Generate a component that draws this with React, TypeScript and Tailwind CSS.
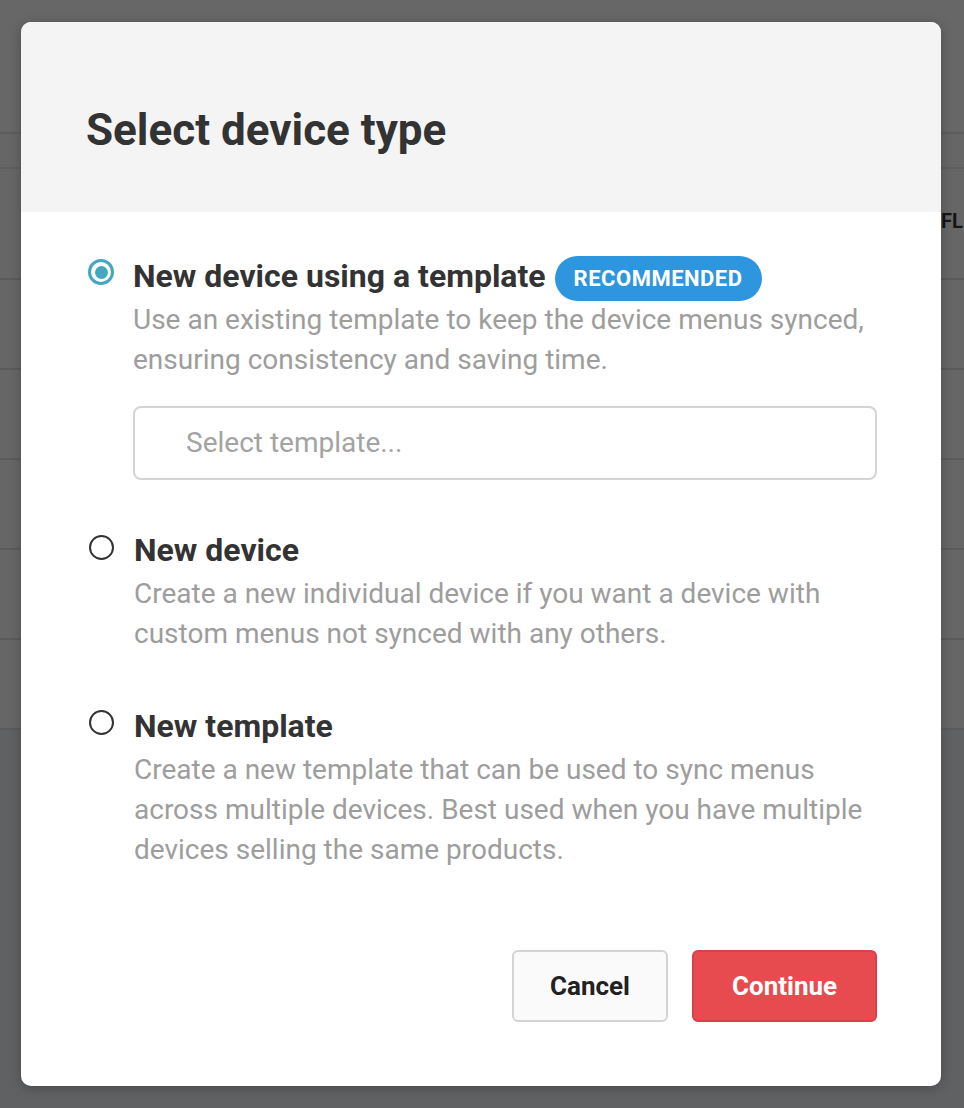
import React from "react";

const font = { fontFamily: "Roboto, 'Noto Sans', Arial, sans-serif" };

function Radio({ checked }: { checked?: boolean }) {
  if (checked) {
    return (
      <div className="w-[26px] h-[26px] rounded-full border-[3px] border-[#45a6c2] flex items-center justify-center shrink-0">
        <div className="w-[13px] h-[13px] rounded-full bg-[#45a6c2]" />
      </div>
    );
  }
  return <div className="w-[25px] h-[25px] rounded-full border-[2.5px] border-[#333333] shrink-0" />;
}

export default function App() {
  return (
    <div className="relative w-[964px] h-[1108px] overflow-hidden bg-[#666666]" style={font}>
      {/* background page dimmed */}
      <div className="flex flex-col">
        <div className="h-[134px] bg-[#676767] border-b-2 border-[#5d5d5d]" />
        <div className="h-[35px] bg-[#666666] border-b-2 border-[#5f5f5f]" />
        <div className="h-[111px] border-b-2 border-[#5b5b5b] pl-[941px] pt-[42px] text-[20px] leading-none font-bold text-[#151515] whitespace-nowrap">
          FL
        </div>
        <div className="h-[90px] border-b-2 border-[#5b5b5b]" />
        <div className="h-[90px] border-b-2 border-[#5b5b5b]" />
        <div className="h-[90px] border-b-2 border-[#5b5b5b]" />
        <div className="h-[90px] border-b-2 border-[#5b5b5b]" />
        <div className="h-[90px] border-b-2 border-[#5b5b5b]" />
        <div className="h-[400px] bg-[#606163]" />
      </div>

      {/* modal */}
      <div className="absolute left-[21px] top-[22px] w-[920px] h-[1064px] bg-white rounded-[10px] overflow-hidden shadow-[0_2px_12px_rgba(0,0,0,0.25)] flex flex-col">
        <div className="h-[190px] bg-[#f4f4f4] pl-[65px] pt-[86px] shrink-0">
          <h1 className="text-[44px] leading-none font-bold text-[#333333]">Select device type</h1>
        </div>

        <div className="flex flex-col pl-[67px] pr-[64px] pt-[40px]">
          {/* option 1 */}
          <div className="flex gap-[19px]">
            <div className="mt-[7px]">
              <Radio checked />
            </div>
            <div className="flex-1 flex flex-col">
              <div className="flex items-start h-[48px] gap-[9px]">
                <span className="text-[32px] leading-[48px] font-bold text-[#333333] whitespace-nowrap">New device using a template</span>
                <span className="mt-[4px] h-[45px] px-[19px] rounded-full bg-[#2d96df] text-white text-[22px] font-bold tracking-[0.5px] flex items-center shrink-0">
                  RECOMMENDED
                </span>
              </div>
              <p className="text-[28px] leading-[40px] text-[#9d9d9d]">
                Use an existing template to keep the device menus synced,
                <br />
                ensuring consistency and saving time.
              </p>
              <div className="mt-[26px] h-[74px] border-2 border-[#d4d4d4] rounded-[8px] flex items-center pl-[51px] text-[28px] text-[#a3a3a3]">
                Select template...
              </div>
            </div>
          </div>

          {/* option 2 */}
          <div className="flex gap-[20px] mt-[46px]">
            <div className="mt-[9px] ml-[1px]">
              <Radio />
            </div>
            <div className="flex-1 flex flex-col">
              <span className="text-[32px] leading-[48px] font-bold text-[#333333]">New device</span>
              <p className="text-[28px] leading-[40px] text-[#9d9d9d]">
                Create a new individual device if you want a device with
                <br />
                custom menus not synced with any others.
              </p>
            </div>
          </div>

          {/* option 3 */}
          <div className="flex gap-[20px] mt-[48px]">
            <div className="mt-[8px] ml-[1px]">
              <Radio />
            </div>
            <div className="flex-1 flex flex-col">
              <span className="text-[32px] leading-[48px] font-bold text-[#333333]">New template</span>
              <p className="text-[28px] leading-[40px] text-[#9d9d9d]">
                Create a new template that can be used to sync menus
                <br />
                across multiple devices. Best used when you have multiple
                <br />
                devices selling the same products.
              </p>
            </div>
          </div>

          {/* buttons */}
          <div className="flex justify-end gap-[24px] mt-[80px]">
            <button className="w-[156px] h-[72px] rounded-[6px] border-2 border-[#d4d4d4] bg-[#fafafb] text-[26px] font-bold text-[#222222]">
              Cancel
            </button>
            <button className="w-[185px] h-[72px] rounded-[6px] border-2 border-[#d9404a] bg-[#e84b4f] text-[26px] font-bold text-white">
              Continue
            </button>
          </div>
        </div>
      </div>
    </div>
  );
}
